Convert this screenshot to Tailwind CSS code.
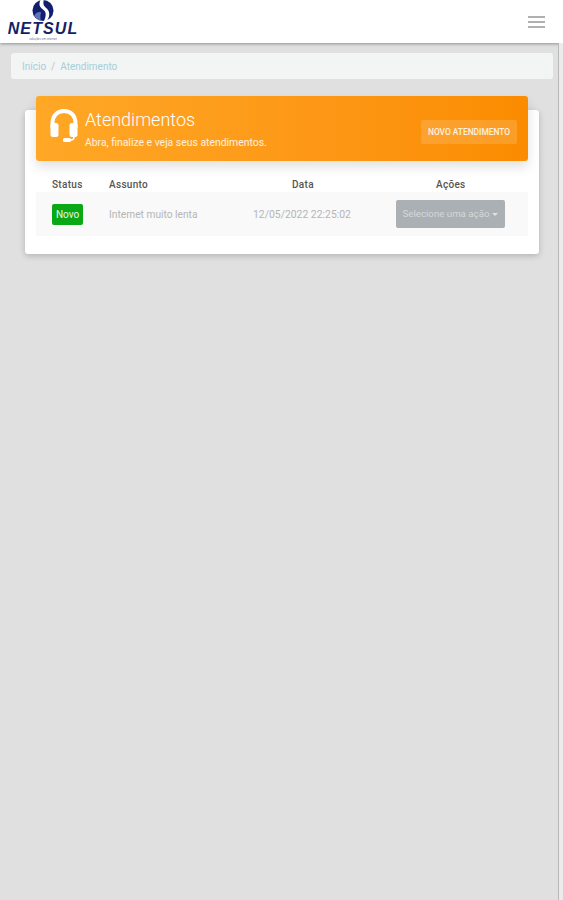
<!DOCTYPE html>
<html lang="en">
<head>
    <meta charset="UTF-8">
    <meta name="viewport" content="width=device-width, initial-scale=1.0">
    <title>Atendimentos</title>
    <script src="https://cdn.jsdelivr.net/npm/@tailwindcss/browser@4"></script>
</head>
<body class="bg-[#e0e0e0] font-['Roboto',sans-serif] overflow-hidden">
    <div class="flex h-[900px]">
        <div class="w-[558px] shrink-0">
            <!-- Navbar -->
            <header class="w-[563px] h-[43px] bg-white shadow-[0_1px_3px_rgba(0,0,0,0.35)] flex items-center justify-between pl-[8px] pr-[18px] relative">
                <div class="flex flex-col items-center w-[70px] h-[43px] overflow-hidden">
                    <svg width="24" height="22" viewBox="0 0 24 23" class="shrink-0">
                        <circle cx="12" cy="11" r="11" fill="#10206e"/>
                        <path d="M10 -1C7 4 8 7 12 10C15 12 16 15 13 22C14 23 15 23 16 22C20 16 19 11 15 8C12 6 12 3 13 -1Z" fill="white"/>
                        <path d="M3 16C5 13 8 12 10 13C9 16 9 19 10 22C7 21 4 19 3 16Z" fill="#5c74b8"/>
                    </svg>
                    <span class="font-['Liberation_Sans',sans-serif] italic font-bold text-[16px] leading-[13px] tracking-[1.1px] text-[#141f66] shrink-0">NETSUL</span>
                    <span class="font-['Liberation_Sans',sans-serif] text-[3px] leading-[4px] text-[#6a7090] mt-[2px] shrink-0">soluções em internet</span>
                </div>
                <div class="flex flex-col gap-[3px] w-[17px]">
                    <div class="h-[2px] bg-[#b0b0b0]"></div>
                    <div class="h-[2px] bg-[#b0b0b0]"></div>
                    <div class="h-[2px] bg-[#b0b0b0]"></div>
                </div>
            </header>

            <!-- Breadcrumb -->
            <nav class="ml-[11px] mr-[5px] mt-[10px] h-[26px] bg-[#f3f4f4] rounded-[3px] flex items-center gap-[5px] pl-[11px] text-[10px] text-[#a5cfd8]">
                <span>Início</span>
                <span class="text-[#c4c4c4]">/</span>
                <span>Atendimento</span>
            </nav>

            <!-- Card -->
            <section class="ml-[25px] mr-[19px] mt-[31px] h-[144px] bg-white rounded-[3px] shadow-[0_2px_6px_rgba(0,0,0,0.2)] px-[11px]">
                <div class="relative -top-[14px] h-[65px] rounded-[3px] bg-gradient-to-r from-[#ffa726] to-[#fb8c00] shadow-[0_6px_12px_rgba(0,0,0,0.12)] flex items-center justify-between pl-[13px] pr-[11px]">
                    <div class="flex items-center gap-[6px]">
                        <svg width="30" height="36" viewBox="0 0 30 36" fill="none" class="mb-[6px]">
                            <path d="M3.500 20V15C3.500 8 8 3 15 3C22 3 26.500 8 26.500 15V20" stroke="white" stroke-width="4"/>
                            <rect x="1.500" y="15" width="8" height="14" rx="2.500" fill="white"/>
                            <rect x="20.500" y="15" width="8" height="14" rx="2.500" fill="white"/>
                            <path d="M25 27V29C25 31 23.500 32 22 32H16" stroke="white" stroke-width="1.500"/>
                            <rect x="14" y="30" width="8" height="4" rx="1.500" fill="white"/>
                        </svg>
                        <div class="text-white pt-[1px]">
                            <h1 class="text-[18px] leading-[22px] font-light">Atendimentos</h1>
                            <p class="text-[10.4px] leading-[14px] mt-[5px] text-white/85">Abra, finalize e veja seus atendimentos.</p>
                        </div>
                    </div>
                    <button class="mt-[7px] w-[96px] h-[24px] rounded-[2px] bg-white/15 text-white/85 text-[8.400px] font-medium uppercase">Novo atendimento</button>
                </div>

                <!-- Table -->
                <div class="-mt-[14px]">
                    <div class="grid grid-cols-[73px_150px_120px_1fr] h-[31px] pt-[16px] text-[10px] leading-[15px] font-medium tracking-[0.3px] text-[#555]">
                        <span class="pl-[16px]">Status</span>
                        <span>Assunto</span>
                        <span class="pl-[33px]">Data</span>
                        <span class="pl-[57px]">Ações</span>
                    </div>
                    <div class="grid grid-cols-[73px_144px_143px_1fr] items-center h-[44px] bg-[#f9f9f9] text-[10.2px] text-[#b5b5b5]">
                        <span class="ml-[16px] w-[31px] h-[21px] rounded-[2px] bg-[#0aa815] text-white/90 text-[10px] flex items-center justify-center">Novo</span>
                        <span class="pt-[2px]">Internet muito lenta</span>
                        <span class="pt-[2px] text-[10.400px]">12/05/2022 22:25:02</span>
                        <button class="w-[109px] h-[28px] pt-[1px] rounded-[2px] bg-[#aab0b3] text-[#d5d8da] text-[9.700px] flex items-center justify-center gap-[3px]">
                            Selecione uma ação
                            <span class="w-0 h-0 border-x-[3px] border-x-transparent border-t-[3px] border-t-[#dfe2e3]"></span>
                        </button>
                    </div>
                </div>
            </section>
        </div>
        <!-- Scrollbar strip -->
        <div class="w-[5px] h-[857px] mt-[43px] bg-[#ebebeb] border-l border-[#b8b8b8] relative z-10"></div>
    </div>
</body>
</html>
